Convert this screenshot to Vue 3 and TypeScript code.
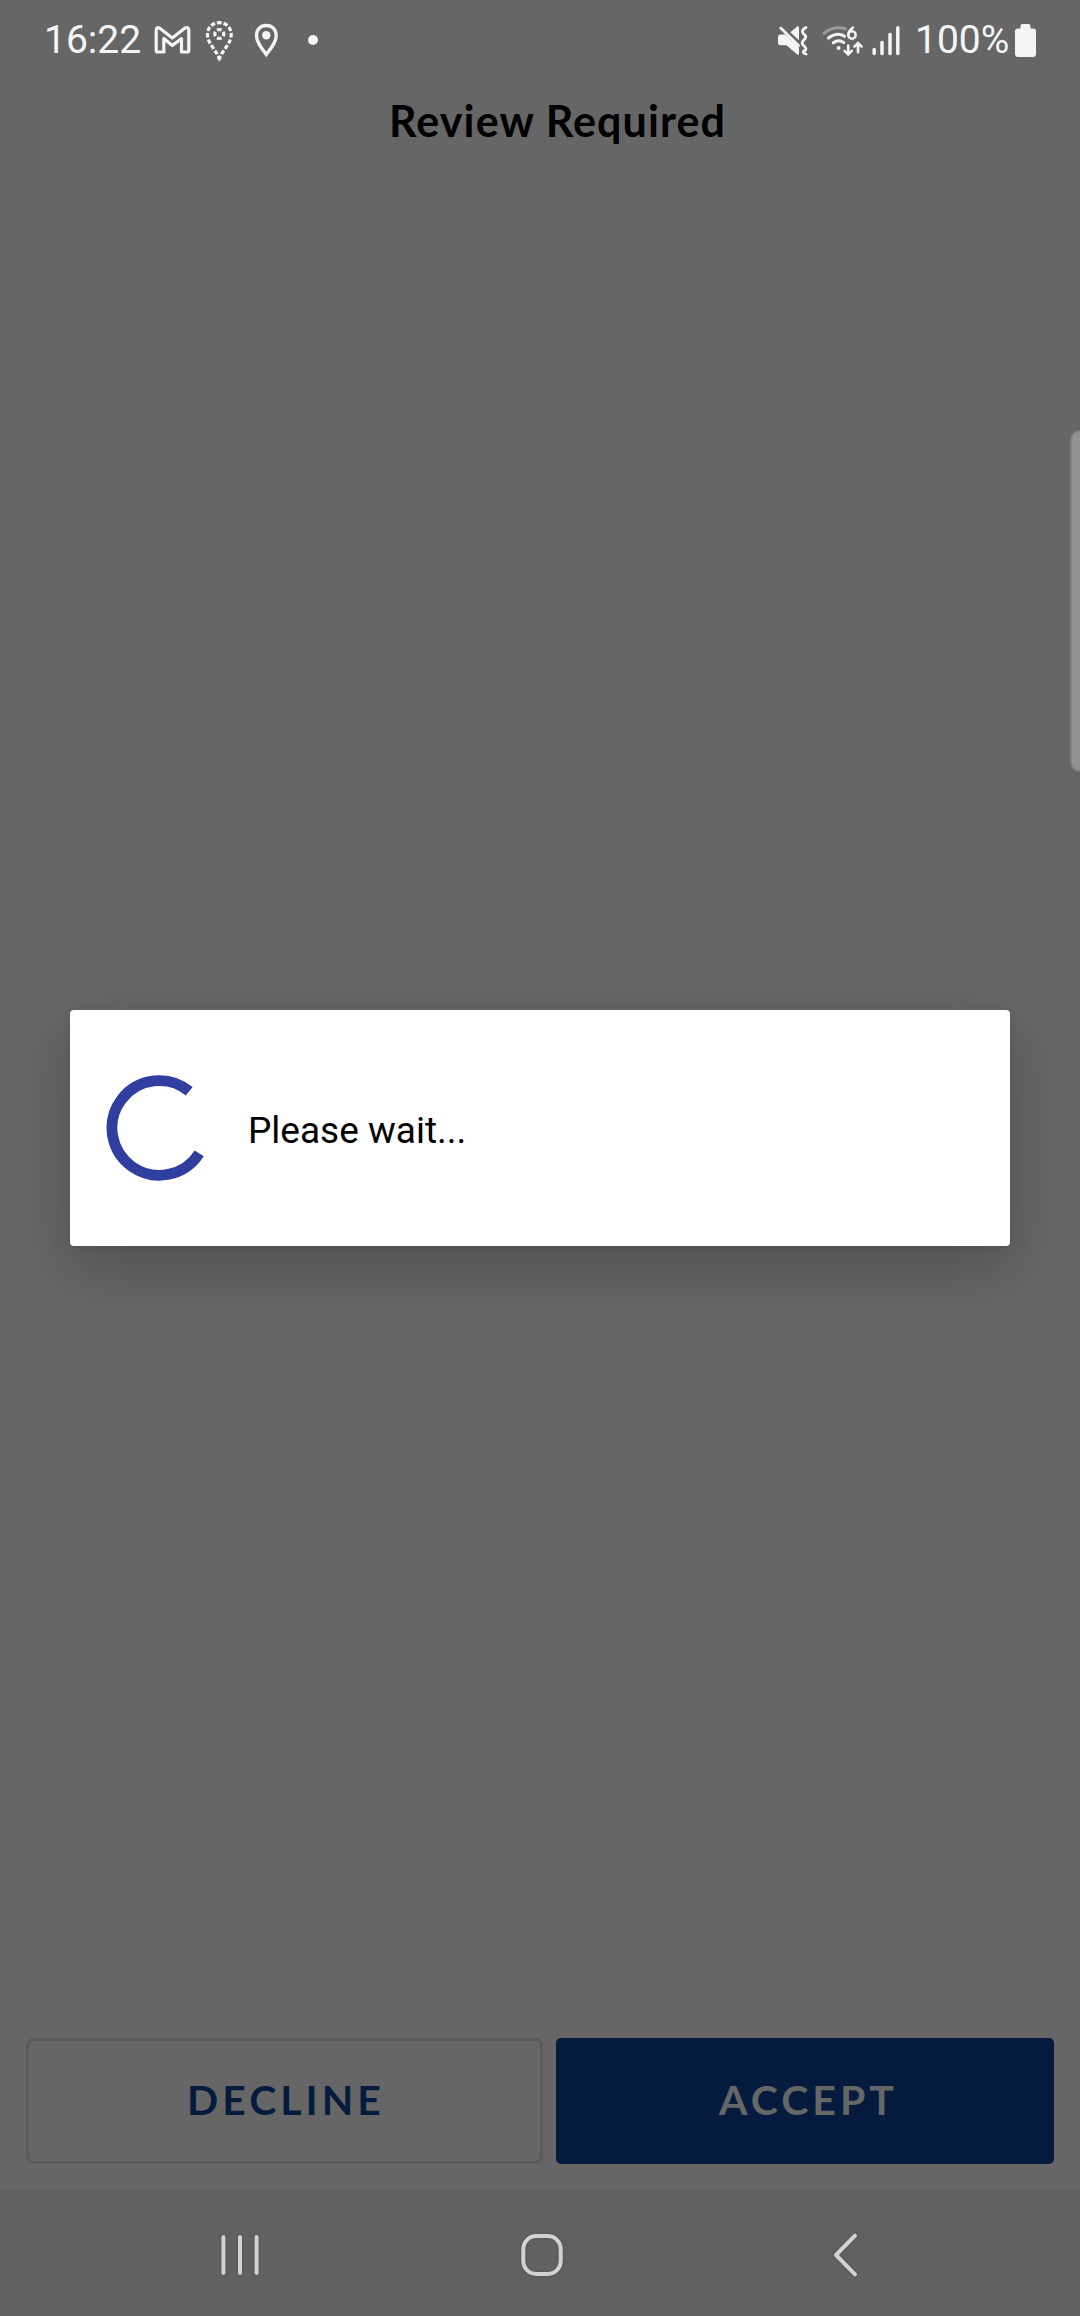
<script setup lang="ts">
interface SignalBar { x: number; top: number }

const time: string = '16:22'
const battery: string = '100%'
const signalBars: SignalBar[] = [
  { x: 874.2, top: 49.5 },
  { x: 882, top: 42.5 },
  { x: 890, top: 34.5 },
  { x: 897.8, top: 27.8 },
]
const recentLines: number[] = [223.4, 240, 256.6]
</script>

<template>
  <main class="screen">
    <header class="status">
      <span class="clock">{{ time }}</span>
      <svg class="left-icons" viewBox="150 0 180 80" width="180" height="80" fill="none" stroke="#f5f5f5">
        <path d="M164 52H157.500Q156.200 52 156.200 50.500V30.500Q156.200 26.500 159.500 28L172.300 38 185 28Q188.800 26.500 188.800 30.500V50.500Q188.800 52 187.500 52H181.500V38.500L172.300 45.500 163.800 38.500V52Z" stroke-width="3.200" stroke-linejoin="round" />
        <path d="M219.300 22.700C212 22.700 207.500 28 207.500 34.500C207.500 43 215 49 219.300 58C223.600 49 231.200 43 231.200 34.500C231.200 28 226.600 22.700 219.300 22.700Z" stroke-width="3.200" pathLength="98" stroke-dasharray="4.800 2.200" stroke-dashoffset="2.400" />
        <circle cx="219.300" cy="34" r="4.500" stroke-width="3.200" pathLength="28" stroke-dasharray="4.800 2.200" stroke-dashoffset="2.400" />
        <circle cx="219.300" cy="57.800" r="2.200" fill="#f5f5f5" stroke="none" />
        <path d="M266.300 25.500C260 25.500 256.500 30 256.500 35.500C256.500 42.500 261.500 48 266.300 54.400C271.100 48 276.200 42.500 276.200 35.500C276.200 30 272.500 25.500 266.300 25.500Z" stroke-width="3.300" />
        <circle cx="266.300" cy="35.200" r="4.200" fill="#f5f5f5" stroke="none" />
        <circle cx="313" cy="40" r="5" fill="#f5f5f5" stroke="none" />
      </svg>
      <svg class="right-icons" viewBox="770 0 140 80" width="140" height="80" fill="none" stroke="#f5f5f5">
        <path d="M780.500 34.500H785.300L799 47.300V54.500L797.500 54.800L786.500 45.300H780.500Q778 45.300 778 43V37Q778 34.500 780.500 34.500ZM790.300 32.300L797.500 26.200L799 26.800V40.200Z" fill="#f5f5f5" stroke="none" />
        <path d="M780.800 28L798.500 45.500" stroke-width="2.800" stroke-linecap="round" />
        <path d="M806 27.500Q800.500 30.500 803.300 33.700Q808 37 803.800 40Q800.500 43.200 804 46Q808 49.300 803.800 51Q802.300 52.800 806 54" stroke-width="2.800" stroke-linecap="round" />
        <path d="M824 33.500Q833.500 25.300 845.500 29" stroke="#999" stroke-width="3" stroke-linecap="round" />
        <path d="M828.500 38Q837.500 31.500 844.500 36.300M833.300 42.800Q838.800 38.800 843.800 42.600" stroke-width="3" stroke-linecap="round" />
        <circle cx="838.600" cy="48" r="2" fill="#f5f5f5" stroke="none" />
        <path d="M853 27.500Q848.300 31 848.300 35.200" stroke-width="2.500" stroke-linecap="round" />
        <circle cx="852" cy="35" r="3.700" stroke-width="2.500" />
        <path d="M848.200 45.500V54.300M844.600 50.900L848.200 54.500L851.800 50.900M858 52.200V43.200M854.400 46.600L858 43L861.600 46.600" stroke-width="2.600" stroke-linecap="round" />
        <path v-for="bar in signalBars" :key="bar.x" :d="`M${bar.x} ${bar.top}V53.500`" stroke-width="3.500" stroke-linecap="round" />
      </svg>
      <span class="percent">{{ battery }}</span>
      <svg class="battery" viewBox="1014 0 24 80" width="24" height="80" fill="#f5f5f5">
        <path d="M1020.500 28.500V26Q1020.500 24 1022.500 24H1028.500Q1030.500 24 1030.500 26V28.500H1033Q1036 28.500 1036 31.500V53.500Q1036 57 1033 57H1018Q1015 57 1015 53.500V31.500Q1015 28.500 1018 28.500Z" />
      </svg>
    </header>

    <h1 class="title"><span>Review Required</span></h1>

    <section class="body">
      <div class="dialog" role="dialog">
        <svg class="spinner" viewBox="0 0 106 106" width="106" height="106">
          <path d="M83.200 16.300A47.300 47.300 0 1 0 93.200 78.300" fill="none" stroke="#303f9f" stroke-width="10.800" />
        </svg>
        <p class="message">Please wait...</p>
      </div>
    </section>

    <footer class="actions">
      <button class="btn decline" type="button"><span>DECLINE</span></button>
      <button class="btn accept" type="button"><span>ACCEPT</span></button>
    </footer>

    <nav class="navbar">
      <svg viewBox="0 2190 1080 126" width="1080" height="126" fill="none" stroke-linecap="round" stroke-linejoin="round">
        <g v-for="layer in ['halo', 'glyph']" :key="layer" :class="layer">
          <path v-for="x in recentLines" :key="x" :d="`M${x} 2237V2273`" />
          <rect x="523.300" y="2236" width="37.400" height="38" rx="13" />
          <path d="M855 2235.700L836 2255L855 2274.300" />
        </g>
      </svg>
    </nav>
    <div class="edge-handle"></div>
  </main>
</template>

<style>
body { background: #666; }
</style>

<style scoped>
.screen {
  position: relative;
  display: flex;
  flex-direction: column;
  width: 1080px;
  height: 2316px;
  overflow: hidden;
  background: #666;
  font-family: Roboto, sans-serif;
}
.status {
  display: flex;
  height: 80px;
  padding-left: 44px;
  color: #f5f5f5;
  font-size: 39px;
  line-height: 81px;
}
.clock { width: 106px; }
.right-icons { margin-left: 440px; }
.percent { width: 104px; padding-left: 5px; box-sizing: border-box; }
.title {
  height: 84px;
  margin: 0;
  padding-left: 389px;
  color: #000;
  font: 700 43px/82px Lato, sans-serif;
  letter-spacing: 1.1px;
  white-space: nowrap;
}
.body {
  display: flex;
  flex: 1;
  flex-direction: column;
  padding: 846px 70px 0;
}
.dialog {
  display: flex;
  align-items: center;
  height: 236px;
  padding-left: 36px;
  box-sizing: border-box;
  border-radius: 4px;
  background: #fff;
  box-shadow: 0 22px 60px rgba(0, 0, 0, 0.22), 0 0 6px rgba(0, 0, 0, 0.06);
}
.message {
  margin: 5px 0 0 36px;
  color: #000;
  font-size: 37px;
  line-height: 44px;
}
.actions {
  display: flex;
  gap: 13px;
  height: 126px;
  padding: 0 26px 26px;
}
.btn {
  height: 126px;
  padding: 0;
  box-sizing: border-box;
  border: 0;
  font: 700 41px/120px Lato, sans-serif;
  letter-spacing: 4px;
}
.btn span { display: block; margin-top: -2px; }
.decline {
  width: 517px;
  padding-left: 3px;
  border: 3px solid #5b5b5b;
  border-radius: 8px;
  background: transparent;
  color: #051b3e;
}
.accept {
  width: 498px;
  padding-left: 7px;
  border-radius: 5px;
  background: #051b3e;
  color: #666;
}
.navbar { height: 126px; background: #616161; }
.navbar svg { display: block; }
.halo { stroke: #5a5a5a; stroke-width: 7px; }
.glyph { stroke: #d2d2d2; stroke-width: 4px; }
.edge-handle {
  position: absolute;
  top: 430px;
  right: 0;
  width: 10px;
  height: 342px;
  box-sizing: border-box;
  border: 2px solid #808080;
  border-right: 0;
  border-radius: 10px 0 0 10px;
  background: #919191;
}
</style>
